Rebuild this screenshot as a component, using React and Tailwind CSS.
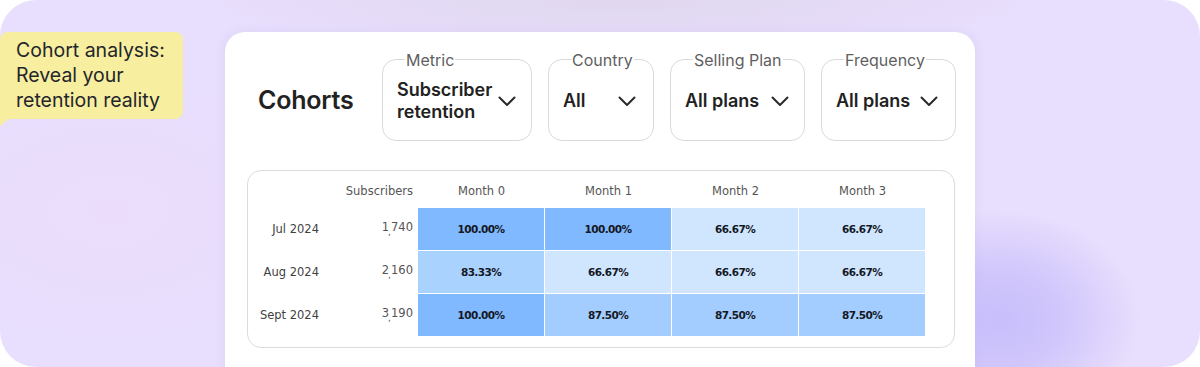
import React from "react";

const Chevron = () => (
  <svg width="18" height="11" viewBox="0 0 18 11" fill="none" className="shrink-0">
    <polyline points="1.5,1.5 9,9 16.5,1.5" stroke="#2a2a2a" strokeWidth="2" strokeLinecap="round" strokeLinejoin="round" />
  </svg>
);

function Select({ label, width, labelLeft, pl, pr, children }) {
  return (
    <div
      className={`relative h-[82px] pt-[2px] rounded-[14px] border border-[#d9d9d9] bg-white flex items-center justify-between ${width} ${pl} ${pr}`}
    >
      <span
        className={`absolute top-[-11px] ${labelLeft} bg-white px-[1px] text-[16px] leading-[22px] text-[#5f5f5f]`}
      >
        {label}
      </span>
      <div className="text-[18px] leading-[22px] font-semibold text-[#222]">{children}</div>
      <Chevron />
    </div>
  );
}

const rows = [
  { label: "Jul 2024", a: "1", b: "740", cells: [["100.00%", "bg-[#80b9ff]"], ["100.00%", "bg-[#80b9ff]"], ["66.67%", "bg-[#d0e6ff]"], ["66.67%", "bg-[#d0e6ff]"]] },
  { label: "Aug 2024", a: "2", b: "160", cells: [["83.33%", "bg-[#a9d2ff]"], ["66.67%", "bg-[#d0e6ff]"], ["66.67%", "bg-[#d0e6ff]"], ["66.67%", "bg-[#d0e6ff]"]] },
  { label: "Sept 2024", a: "3", b: "190", cells: [["100.00%", "bg-[#80b9ff]"], ["87.50%", "bg-[#a3cdff]"], ["87.50%", "bg-[#a3cdff]"], ["87.50%", "bg-[#a3cdff]"]] },
];

export default function App() {
  return (
    <div className="w-[1200px] h-[367px] bg-white overflow-hidden" style={{ fontFamily: "Inter, 'Noto Sans', sans-serif" }}>
      <div className="relative w-[1200px] h-[367px] rounded-[36px] overflow-hidden bg-[#e8defd] bg-[radial-gradient(ellipse_140px_110px_at_1000px_320px,#c8befb_0%,#d1c7fc_45%,rgba(232,222,253,0)_100%),radial-gradient(ellipse_420px_50px_at_620px_0px,#e0d7ee_0%,rgba(232,222,253,0)_100%),radial-gradient(ellipse_220px_140px_at_110px_210px,#ebdcfb_0%,rgba(232,222,253,0)_100%)]">
        <div className="flex pt-[32px]">
          {/* note */}
          <div className="relative w-[183px] h-[87px] shrink-0 rounded-[8px] rounded-bl-none bg-[#f8eea0] pl-[16px] pt-[6px] text-[19.5px] leading-[25px] text-[#23252b]">
            <div>Cohort analysis:</div>
            <div>Reveal your</div>
            <div>retention reality</div>
            <svg className="absolute left-0 top-[86px]" width="10" height="8" viewBox="0 0 10 8">
              <polygon points="0,0 10,0 0,8" fill="#f8eea0" />
            </svg>
          </div>

          {/* card */}
          <div className="ml-[42px] w-[750px] h-[360px] shrink-0 rounded-t-[20px] bg-white shadow-[0_0_12px_rgba(150,130,200,0.12)]">
            <div className="flex items-center pt-[27px] pl-[33px]">
              <div className="text-[25px] font-semibold text-[#222] w-[124px] tracking-[-0.2px] pt-[1px]">Cohorts</div>
              <div className="flex gap-[16px]">
                <Select label="Metric" width="w-[150px]" labelLeft="left-[22px]" pl="pl-[14px]" pr="pr-[15px]">
                  <div>Subscriber</div>
                  <div>retention</div>
                </Select>
                <Select label="Country" width="w-[106px]" labelLeft="left-[22px]" pl="pl-[14px]" pr="pr-[17px]">
                  All
                </Select>
                <Select label="Selling Plan" width="w-[135px]" labelLeft="left-[22px]" pl="pl-[14px]" pr="pr-[15px]">
                  All plans
                </Select>
                <Select label="Frequency" width="w-[135px]" labelLeft="left-[22px]" pl="pl-[14px]" pr="pr-[17px]">
                  All plans
                </Select>
              </div>
            </div>

            {/* table */}
            <div
              className="ml-[22px] mt-[29px] w-[708px] h-[178px] rounded-[14px] border border-[#dcdcdc] bg-white"
              style={{ fontFamily: "'DejaVu Sans', Verdana, sans-serif" }}
            >
              <div className="flex h-[37px] pt-[4px] items-center text-[11.5px] text-[#555]">
                <div className="w-[71px]" />
                <div className="w-[94px] text-right">Subscribers</div>
                <div className="w-[5px]" />
                {["Month 0", "Month 1", "Month 2", "Month 3"].map((m) => (
                  <div key={m} className="w-[127px] text-center">{m}</div>
                ))}
              </div>
              <div className="flex flex-col gap-[1px]">
                {rows.map((r) => (
                  <div key={r.label} className="flex h-[42px] items-center">
                    <div className="w-[71px] text-right text-[11.5px] text-[#3f3f3f] pt-[1px]">{r.label}</div>
                    <div className="w-[94px] text-right text-[11.5px] text-[#555] -mt-[3px]">
                      {r.a}
                      <span className="inline-block w-[2px] relative top-[4px] -ml-[1px] mr-[1px] text-[9px]">,</span>
                      {r.b}
                    </div>
                    <div className="w-[5px]" />
                    <div className="flex gap-[1px]">
                      {r.cells.map(([v, c], i) => (
                        <div
                          key={i}
                          className={`w-[126px] h-[42px] pt-[1px] flex items-center justify-center text-[10.5px] tracking-[-0.6px] font-bold text-[#141824] ${c}`}
                        >
                          {v}
                        </div>
                      ))}
                    </div>
                  </div>
                ))}
              </div>
            </div>
          </div>
        </div>
      </div>
    </div>
  );
}
